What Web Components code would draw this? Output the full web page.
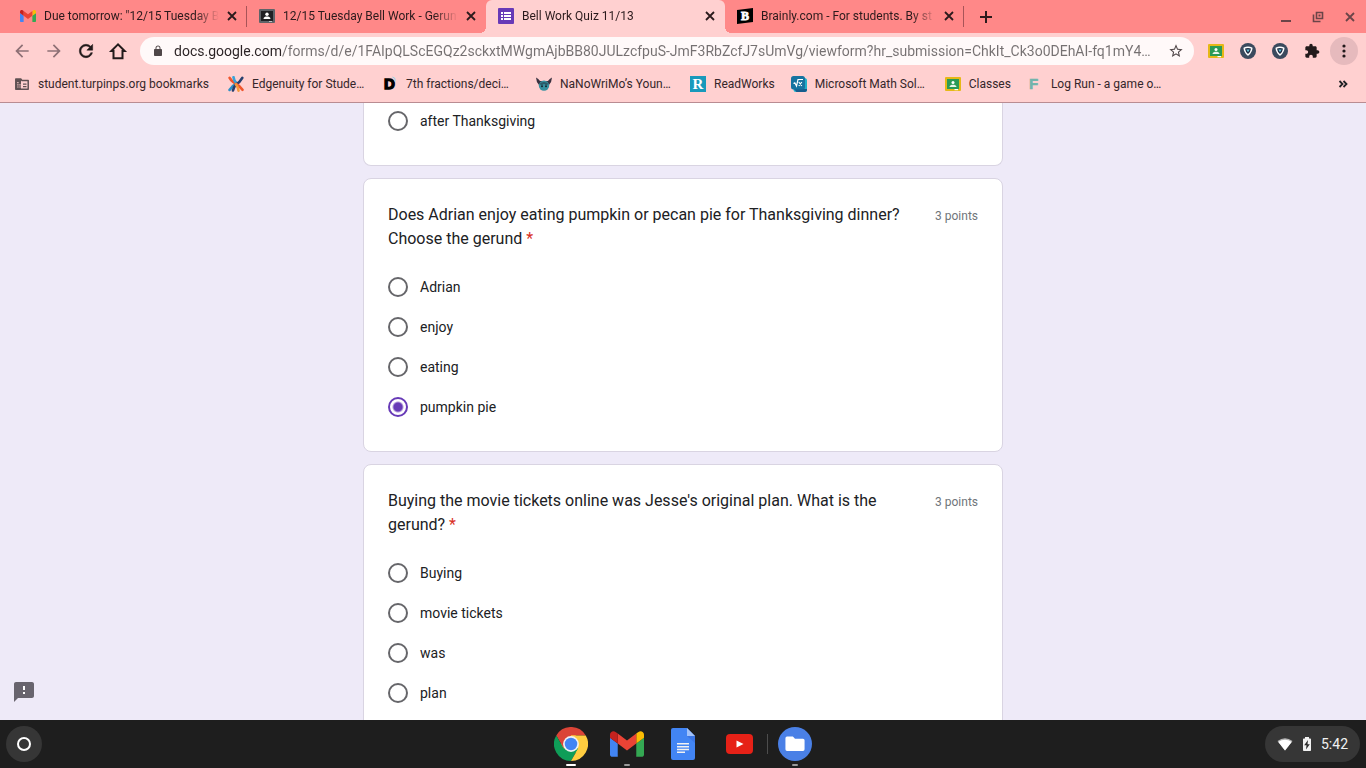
<!DOCTYPE html>
<html lang="en">
<head>
<meta charset="utf-8">
<meta name="viewport" content="width=device-width, initial-scale=1">
<title>Bell Work Quiz 11/13</title>
<style>
  html, body { height: 100%; }
  body {
    margin: 0;
    overflow: hidden;
    font-family: Roboto, "Noto Sans", sans-serif;
    font-size: 12px;
    color: #202124;
  }
</style>
</head>
<body>
<desk-top>
  <tab-strip slot="browser">
    <browser-tab icon="gmail" divider>Due tomorrow: "12/15 Tuesday B</browser-tab>
    <browser-tab icon="classroom-dark">12/15 Tuesday Bell Work - Gerun</browser-tab>
    <browser-tab icon="forms" active>Bell Work Quiz 11/13</browser-tab>
    <browser-tab icon="brainly" divider>Brainly.com - For students. By st</browser-tab>
  </tab-strip>
  <nav-bar slot="browser" url="docs.google.com/forms/d/e/1FAIpQLScEGQz2sckxtMWgmAjbBB80JULzcfpuS-JmF3RbZcfJ7sUmVg/viewform?hr_submission=ChkIt_Ck3o0DEhAI-fq1mY4…"></nav-bar>
  <bookmark-bar slot="browser">
    <book-mark icon="folder" managed>student.turpinps.org bookmarks</book-mark>
    <book-mark icon="edgenuity" cut>Edgenuity for Stude…</book-mark>
    <book-mark icon="letter-d" cut>7th fractions/deci…</book-mark>
    <book-mark icon="viking" cut>NaNoWriMo’s Youn…</book-mark>
    <book-mark icon="readworks">ReadWorks</book-mark>
    <book-mark icon="math" cut>Microsoft Math Sol…</book-mark>
    <book-mark icon="classroom">Classes</book-mark>
    <book-mark icon="letter-f" cut>Log Run - a game o…</book-mark>
  </bookmark-bar>
  <quiz-page slot="page">
    <quiz-card continued>
      <quiz-option>after Thanksgiving</quiz-option>
    </quiz-card>
    <quiz-card points="3 points">
      <span slot="question">Does Adrian enjoy eating pumpkin or pecan pie for Thanksgiving dinner? Choose the gerund</span>
      <quiz-option>Adrian</quiz-option>
      <quiz-option>enjoy</quiz-option>
      <quiz-option>eating</quiz-option>
      <quiz-option checked>pumpkin pie</quiz-option>
    </quiz-card>
    <quiz-card points="3 points">
      <span slot="question">Buying the movie tickets online was Jesse's original plan. What is the gerund?</span>
      <quiz-option>Buying</quiz-option>
      <quiz-option>movie tickets</quiz-option>
      <quiz-option>was</quiz-option>
      <quiz-option>plan</quiz-option>
    </quiz-card>
  </quiz-page>
  <app-shelf slot="shelf" time="5:42"></app-shelf>
</desk-top>

<script>
  const ICONS = {
    gmail: ['52 42 88 66', '<path fill="#4285f4" d="M58 108h14V74L52 59v43c0 3.32 2.69 6 6 6"/><path fill="#34a853" d="M120 108h14c3.32 0 6-2.69 6-6V59l-20 15"/><path fill="#fbbc04" d="M120 48v26l20-15v-8c0-7.42-8.47-11.65-14.4-7.2"/><path fill="#ea4335" d="M72 74V48l24 18 24-18v26L96 92"/><path fill="#c5221f" d="M52 51v8l20 15V48l-5.6-4.2c-5.94-4.45-14.4-.22-14.4 7.2"/>'],
    'classroom-dark': ['0 0 16 16', '<rect y="1" width="16" height="14" rx="1" fill="#5f6368"/><rect x="2" y="3" width="12" height="10" fill="#202124"/><circle cx="8" cy="6.3" r="1.7" fill="#fff"/><path fill="#fff" d="M4.5 11c0-1.9 2-2.5 3.5-2.5s3.5.6 3.5 2.5z"/><path d="M10 13h3v1h-3z" fill="#bdc1c6"/>'],
    classroom: ['0 0 16 16', '<rect y="1" width="16" height="14" rx="1" fill="#e5b817"/><rect x="2" y="3" width="12" height="10" fill="#2b9a56"/><circle cx="8" cy="6.5" r="1.5" fill="#fff"/><path fill="#e8f5e9" d="M4.5 11c0-1.7 2-2.2 3.5-2.2s3.5.5 3.5 2.2z"/><path d="M9.5 13H13v1.2H9.5z" fill="#fff"/>'],
    forms: ['0 0 16 16', '<rect width="16" height="16" rx="1" fill="#673ab7"/><path fill="#fff" d="M3 4h2v2H3zM6 4h7v2H6zM3 7h2v2H3zM6 7h7v2H6zM3 10h2v2H3zM6 10h7v2H6z"/>'],
    brainly: ['0 0 16 16', '<path d="M0 2 16 0v14L0 16z"/><text x="8" y="12" text-anchor="middle" font-family="Liberation Serif, serif" font-weight="700" font-size="12" fill="#fff" stroke="#fff" stroke-width=".8">B</text>'],
    close: ['0 0 16 16', '<path d="M4 4l8 8M12 4l-8 8" stroke="currentColor" stroke-width="1.8" fill="none"/>'],
    plus: ['0 0 16 16', '<path d="M8 2v12M2 8h12" stroke="currentColor" stroke-width="2" fill="none"/>'],
    minimize: ['0 0 16 16', '<path d="M3 12h10" stroke="currentColor" stroke-width="2"/>'],
    restore: ['0 0 16 16', '<path d="M6.5 3.5h6v6h-6zM3.5 5.5v7h7" stroke="currentColor" stroke-width="1.6" fill="none"/><path d="M8.5 5.5h2v2h-2z" fill="currentColor"/>'],
    back: ['0 0 24 24', '<path fill="currentColor" d="M20 11H7.83l5.59-5.59L12 4l-8 8 8 8 1.41-1.41L7.83 13H20v-2z"/>'],
    forward: ['0 0 24 24', '<path fill="currentColor" d="M4 13h12.17l-5.59 5.59L12 20l8-8-8-8-1.41 1.41L16.17 11H4z"/>'],
    reload: ['0 0 24 24', '<path fill="currentColor" stroke="currentColor" stroke-width=".6" d="M17.65 6.35C16.2 4.9 14.21 4 12 4c-4.42 0-7.99 3.58-7.99 8s3.57 8 7.99 8c3.73 0 6.84-2.55 7.73-6h-2.08c-.82 2.33-3.04 4-5.65 4-3.31 0-6-2.69-6-6s2.69-6 6-6c1.66 0 3.14.69 4.22 1.78L13 11h7V4l-2.35 2.35z"/>'],
    home: ['0 0 24 24', '<path fill="none" stroke="currentColor" stroke-width="2.4" d="M12 4 4 12h2.6v8.600h10.800V12H20z"/>'],
    lock: ['0 0 24 24', '<path fill="currentColor" d="M18 8h-1V6c0-2.76-2.24-5-5-5S7 3.24 7 6v2H6c-1.1 0-2 .9-2 2v10c0 1.1.9 2 2 2h12c1.1 0 2-.9 2-2V10c0-1.1-.9-2-2-2zm-2.900 0H8.9V6c0-1.71 1.39-3.1 3.1-3.1s3.1 1.39 3.1 3.1v2z"/>'],
    star: ['0 0 24 24', '<path fill="currentColor" d="M22 9.24l-7.19-.62L12 2 9.19 8.63 2 9.24l5.46 4.73L5.82 21 12 17.27 18.18 21l-1.63-7.03L22 9.24zM12 15.4l-3.76 2.27 1-4.28-3.32-2.88 4.38-.38L12 6.1l1.71 4.04 4.38.38-3.32 2.88 1 4.28L12 15.4z"/>'],
    shield: ['0 0 16 16', '<circle cx="8" cy="8" r="8" fill="#3b4a5e"/><path d="M4.2 5.2Q8 3.2 11.8 5.2 11.5 9 8 12 4.5 9 4.2 5.2z" fill="#202b44" stroke="#fff" stroke-width="1.4" stroke-linejoin="round"/><path d="M6.3 6.5h3.4L8 9.3z" fill="#5fc5d8"/>'],
    puzzle: ['0 0 24 24', '<path fill="currentColor" d="M20.5 11H19V7c0-1.1-.9-2-2-2h-4V3.5C13 2.12 11.88 1 10.5 1S8 2.12 8 3.5V5H4c-1.1 0-1.99.9-1.99 2v3.8H3.5c1.49 0 2.7 1.21 2.7 2.7s-1.21 2.7-2.7 2.7H2V20c0 1.1.9 2 2 2h3.8v-1.5c0-1.49 1.21-2.7 2.7-2.7s2.7 1.21 2.7 2.7V22H17c1.1 0 2-.9 2-2v-4h1.5c1.38 0 2.5-1.12 2.5-2.5S21.88 11 20.5 11z"/>'],
    dots: ['0 0 16 16', '<g fill="currentColor"><circle cx="8" cy="3" r="1.6"/><circle cx="8" cy="8" r="1.6"/><circle cx="8" cy="13" r="1.6"/></g>'],
    chevrons: ['0 0 16 16', '<path d="M4.5 5l3 3-3 3M8.5 5l3 3-3 3" stroke="currentColor" stroke-width="1.8" fill="none"/>'],
    folder: ['0 0 16 16', '<path fill="none" stroke="#5f5052" stroke-width="1.5" stroke-linejoin="round" d="M1.8 3h5L8 4.600h6.2V13.200H1.800z"/><path fill="#5f5052" d="M2 3h5v10H2z"/><path fill="#ffd0d0" d="M3.3 6h1.2v1.2H3.3zM3.3 8.2h1.2v1.2H3.3zM3.3 10.4h1.2v1.2H3.3zM5.4 8.2h1.2v1.2H5.4zM5.4 10.4h1.2v1.2H5.4z"/><path fill="#5f5052" d="M9 7.5h3.5v1.2H9zM9 10h3.5v1.2H9z"/>'],
    edgenuity: ['0 0 16 16', '<g fill="none" stroke-width="2.6" stroke-linecap="round"><path stroke="#f0562d" d="M1.6 1.8Q4 6 8 7.5"/><path stroke="#37a3d8" d="M5.5 1.2Q6 4.5 8 6.5"/><path stroke="#27406f" d="M14.3 1.8Q12 6 8 8.5"/><path stroke="#2f8fc4" d="M8 8Q4.5 9.5 1.5 14"/><path stroke="#27406f" d="M7.5 9Q6 11 5 14.5"/><path stroke="#f0562d" d="M8 8Q11.5 9.5 14.5 13.8"/><path stroke="#f59a3d" d="M8 8.5Q10 11 10.5 14.6"/></g>'],
    'letter-d': ['0 0 16 16', '<text x="2" y="13" font-family="Liberation Sans, sans-serif" font-weight="700" font-size="15" stroke="#000" stroke-width="1.4">D</text><path d="M10.5 1 13 2.5v3" stroke="#8fd0e6" fill="none"/>'],
    viking: ['0 0 16 16', '<path fill="#3a3140" d="M0 1.5Q2.5 2.5 4 5h8q1.5-2.5 4-3.5Q15.8 6 13 9L10 8H6L3 9Q.2 6 0 1.5z"/><circle cx="8" cy="9.6" r="5.2" fill="#36909e"/><path fill="#2c5a68" d="M3.2 8Q8 4 12.8 8L10 9.2 8 7.8 6 9.2z"/><circle cx="6" cy="10.3" r="1" fill="#182530"/><circle cx="10" cy="10.3" r="1" fill="#182530"/>'],
    readworks: ['0 0 16 16', '<rect width="16" height="16" fill="#1899bb"/><text x="8" y="13" text-anchor="middle" font-family="Liberation Serif, serif" font-weight="700" font-size="15" fill="#fff">R</text>'],
    math: ['0 0 16 16', '<rect x="2.5" y="2" width="13.5" height="14" rx="2.5" fill="#1fb0c9"/><path d="M3 13h13v.5A2.500 2.500 0 0 1 13.5 16h-8z" fill="#155c8d"/><rect width="14" height="13.5" rx="2.5" fill="#1673a0"/><path d="M2.5 7.5l1.3-.7L5.5 10 7 3.500h5M7.8 6l3 4M10.8 6l-3 4" stroke="#fff" stroke-width="1.2" fill="none"/>'],
    'letter-f': ['0 0 16 16', '<text x="2" y="13" font-family="Liberation Sans, sans-serif" font-weight="700" font-size="15" fill="#72b4ac" stroke="#72b4ac" stroke-width=".6">F</text>'],
    feedback: ['0 0 24 24', '<path fill="#fff" d="M10 5h4v10h-4z"/><path fill="currentColor" d="M20 2H4c-1.1 0-2 .9-2 2v18l4-4h14c1.1 0 2-.9 2-2V4c0-1.1-.9-2-2-2zm-7 12h-2v-2h2v2zm0-4h-2V6h2v4z"/>'],
    chrome: ['0 0 48 48', '<circle cx="24" cy="24" r="14" fill="#ffce44"/><path fill="#db4437" d="M3.2 12A24 24 0 0 1 44.8 12H24L13.6 30z"/><path fill="#0f9d58" d="M3.2 12 13.6 30h20.8L24 48A24 24 0 0 1 3.2 12z"/><path fill="#ffcd40" d="M44.8 12A24 24 0 0 1 24 48l10.4-18L24 12z"/><circle cx="24" cy="24" r="11.2" fill="#f1f1f1"/><circle cx="24" cy="24" r="8.8" fill="#4285f4"/>'],
    docs: ['0 0 24 32', '<path fill="#4285f4" d="M2 0h14l8 8v22a2 2 0 0 1-2 2H2a2 2 0 0 1-2-2V2a2 2 0 0 1 2-2z"/><path fill="#a1c2fa" d="M16 0l8 8h-8z"/><path fill="#3367d6" d="M16 8h8v7z" opacity=".5"/><path fill="#f1f1f1" d="M6 15h12v1.5H6zM6 18h12v1.5H6zM6 20.8h12v1.5H6zM6 23.5h8V25H6z"/>'],
    youtube: ['0 0 27 20', '<rect width="27" height="20" rx="4" fill="#e62117"/><path fill="#fff" d="M10.5 6.5v7l7-3.5z"/>'],
    files: ['0 0 32 32', '<circle cx="16" cy="16" r="16" fill="#4a80e6"/><path fill="#fff" d="M8.5 9H14l2 2h7.5A1.5 1.5 0 0 1 25 12.5V21a1.5 1.5 0 0 1-1.5 1.5h-15A1.5 1.5 0 0 1 7 21V10.5A1.5 1.5 0 0 1 8.5 9z"/>'],
    launcher: ['0 0 16 16', '<circle cx="8" cy="8" r="6" fill="none" stroke="#fff" stroke-width="2"/>'],
    wifi: ['0 0 16 16', '<path fill="#b5b5b5" d="M8 14.5.5 5Q8-.5 15.5 5z"/><path fill="#fff" d="M8 14.5 1.3 6Q8 1.600 14.700 6z"/>'],
    battery: ['0 0 16 16', '<path fill="#f1f1f1" d="M6 1h4v1.500h1.200q.8 0 .8.8v11q0 .7-.8.7H4.800q-.8 0-.8-.7v-11q0-.8.8-.8H6z"/><path fill="#2a2a2a" d="M9 4 5.2 9.3h2.3L7 13.5l3.8-5.3H8.5z"/>']
  };

  function define(name, markup, setup) {
    customElements.define(name, class extends HTMLElement {
      constructor() {
        super();
        this.attachShadow({mode: 'open'}).innerHTML = markup;
      }
      connectedCallback() {
        if (setup) setup(this, this.shadowRoot);
      }
    });
  }

  define('ui-icon', `
    <style>
      :host { display: block; flex: none; width: var(--w, 16px); height: var(--h, var(--w, 16px)); }
      svg { display: block; width: 100%; height: 100%; }
    </style>
    <svg aria-hidden="true"></svg>`, (el, root) => {
      const [box, shapes] = ICONS[el.getAttribute('name')];
      const svg = root.querySelector('svg');
      svg.setAttribute('viewBox', box);
      svg.innerHTML = shapes;
  });

  define('icon-button', `
    <style>
      :host { display: block; flex: none; }
      button {
        display: grid;
        place-items: center;
        width: var(--button, 28px);
        height: var(--button, 28px);
        padding: 0;
        border: 0;
        border-radius: 50%;
        background: var(--face, transparent);
        color: inherit;
      }
      ui-icon { --w: var(--icon, 16px); }
    </style>
    <button type="button"></button>`, (el, root) => {
      const button = root.querySelector('button');
      button.setAttribute('aria-label', el.getAttribute('label'));
      button.innerHTML = `<ui-icon name="${el.getAttribute('icon')}"></ui-icon>`;
  });

  define('desk-top', `
    <style>
      :host { display: flex; flex-direction: column; height: 100vh; }
      header { flex: none; background: #ffd0d0; border-bottom: 1px solid #b98c92; }
      main { flex: 1; min-height: 0; }
    </style>
    <header><slot name="browser"></slot></header>
    <main><slot name="page"></slot></main>
    <slot name="shelf"></slot>`);

  define('tab-strip', `
    <style>
      :host { display: flex; align-items: center; height: 33px; padding-left: 8px; background: #ff8888; color: #2b1a1c; }
      .plus { margin-left: 8px; }
      .window { display: flex; margin-left: auto; color: #6b4448; --button: 32px; }
    </style>
    <slot></slot>
    <icon-button class="plus" icon="plus" label="New tab"></icon-button>
    <div class="window">
      <icon-button icon="minimize" label="Minimize"></icon-button>
      <icon-button icon="restore" label="Restore"></icon-button>
      <icon-button icon="close" label="Close window"></icon-button>
    </div>`);

  define('browser-tab', `
    <style>
      :host {
        position: relative;
        display: flex;
        align-items: center;
        box-sizing: border-box;
        flex: 0 1 239px;
        min-width: 0;
        height: 100%;
        padding: 0 7px 1px 12px;
      }
      .title {
        flex: 1;
        min-width: 0;
        margin: 0 5px 0 8px;
        overflow: hidden;
        white-space: nowrap;
        line-height: 16px;
        -webkit-mask-image: linear-gradient(to left, transparent, #000 24px);
        mask-image: linear-gradient(to left, transparent, #000 24px);
      }
      icon-button { --button: 16px; }
      :host([active]) { background: #ffd0d0; border-radius: 6px 6px 0 0; }
      /* flared feet of the selected tab */
      :host([active])::before, :host([active])::after {
        content: "";
        position: absolute;
        bottom: 0;
        width: 6px;
        height: 6px;
      }
      :host([active])::before { right: 100%; background: radial-gradient(circle at 0 0, transparent 6px, #ffd0d0 6px); }
      :host([active])::after { left: 100%; background: radial-gradient(circle at 100% 0, transparent 6px, #ffd0d0 6px); }
      :host([divider])::after {
        content: "";
        position: absolute;
        right: 0;
        top: 6px;
        bottom: 6px;
        width: 1px;
        background: #a85458;
      }
    </style>
    <span id="icon"></span>
    <span class="title"><slot></slot></span>
    <icon-button icon="close" label="Close tab"></icon-button>`, (el, root) => {
      root.querySelector('#icon').innerHTML = `<ui-icon name="${el.getAttribute('icon')}"></ui-icon>`;
  });

  define('nav-bar', `
    <style>
      :host { display: flex; align-items: center; gap: 4px; height: 36px; padding: 0 8px; color: #221a1b; --icon: 20px; }
      .dim { color: #8e7075; }
      .url {
        display: flex;
        align-items: center;
        flex: 1;
        min-width: 0;
        height: 28px;
        margin: 0 4px;
        padding: 0 4px 0 12px;
        border-radius: 14px;
        background: #fff9f9;
        color: #4f4648;
      }
      .url ui-icon { --w: 12px; }
      .url icon-button { --icon: 16px; }
      /* host name dark, path grey */
      input {
        flex: 1;
        min-width: 0;
        height: 20px;
        margin: 0 4px 0 10px;
        padding: 0;
        border: 0;
        outline: 0;
        font: 14px/20px Roboto, "Noto Sans", sans-serif;
        color: #757071;
        -webkit-text-fill-color: transparent;
        background: linear-gradient(to right, #2a2224 107px, #757071 107px);
        -webkit-background-clip: text;
        background-clip: text;
      }
      .small { --icon: 16px; }
      .menu { --icon: 16px; --face: #e6babd; }
    </style>
    <icon-button class="dim" icon="back" label="Back"></icon-button>
    <icon-button class="dim" icon="forward" label="Forward"></icon-button>
    <icon-button icon="reload" label="Reload"></icon-button>
    <icon-button icon="home" label="Home"></icon-button>
    <div class="url">
      <ui-icon name="lock"></ui-icon>
      <input type="text" aria-label="Address" spellcheck="false">
      <icon-button icon="star" label="Bookmark this page"></icon-button>
    </div>
    <icon-button class="small" icon="classroom" label="Classroom"></icon-button>
    <icon-button class="small" icon="shield" label="Shield"></icon-button>
    <icon-button class="small" icon="shield" label="Shield"></icon-button>
    <icon-button class="small" icon="puzzle" label="Extensions"></icon-button>
    <icon-button class="menu" icon="dots" label="Menu"></icon-button>`, (el, root) => {
      root.querySelector('input').value = el.getAttribute('url');
  });

  define('bookmark-bar', `
    <style>
      :host { display: flex; align-items: center; gap: 16px; height: 30px; padding: 0 9px 3px 14px; }
      icon-button { margin-left: auto; }
    </style>
    <slot></slot>
    <icon-button icon="chevrons" label="More bookmarks"></icon-button>`);

  define('book-mark', `
    <style>
      :host { display: block; flex: none; }
      a { display: flex; align-items: center; gap: 8px; color: #35262a; text-decoration: none; line-height: 16px; white-space: nowrap; }
      :host([cut]) .label { min-width: 114px; }
      :host([managed]) .label { min-width: 174px; }
    </style>
    <a href="#"><span id="icon"></span><span class="label"><slot></slot></span></a>`, (el, root) => {
      root.querySelector('#icon').innerHTML = `<ui-icon name="${el.getAttribute('icon')}"></ui-icon>`;
  });

  define('quiz-page', `
    <style>
      :host { display: block; position: relative; height: 100%; overflow: hidden; background: #eeeaf8; }
      form {
        display: flex;
        flex-direction: column;
        gap: 12px;
        max-width: 640px;
        margin: -2px auto 0;
      }
      .feedback { position: absolute; left: 12px; bottom: 16px; color: #68646e; --button: 24px; --icon: 24px; }
    </style>
    <form><slot></slot></form>
    <icon-button class="feedback" icon="feedback" label="Report a problem"></icon-button>`);

  define('quiz-card', `
    <style>
      :host {
        display: block;
        flex: none;
        box-sizing: border-box;
        padding: 24px;
        border: 1px solid #d9d4e2;
        border-radius: 8px;
        background: #fff;
      }
      :host([continued]) { padding-top: 0; border-top: 0; border-radius: 0 0 8px 8px; }
      .head { display: flex; gap: 16px; margin-bottom: 16px; line-height: 24px; }
      .question { flex: 1; font-size: 16px; }
      .star { color: #d93025; }
      .points { flex: none; padding-top: 1px; color: #70757a; }
    </style>
    <div class="head">
      <div class="question" role="heading" aria-level="2"><slot name="question"></slot> <span class="star">*</span></div>
      <div class="points"></div>
    </div>
    <div role="radiogroup"><slot></slot></div>`, (el, root) => {
      if (el.hasAttribute('continued')) {
        root.querySelector('.head').remove();
        return;
      }
      root.querySelector('.points').textContent = el.getAttribute('points');
  });

  define('quiz-option', `
    <style>
      :host { display: block; }
      label { display: flex; align-items: center; gap: 12px; height: 40px; font-size: 14px; line-height: 20px; }
      input {
        appearance: none;
        box-sizing: border-box;
        width: 20px;
        height: 20px;
        margin: 0;
        border: 2px solid #66666a;
        border-radius: 50%;
        background: #fff;
      }
      input:checked { border-color: #673ab7; background: radial-gradient(circle, #673ab7 4px, #fff 6px); }
    </style>
    <label><input type="radio"><span><slot></slot></span></label>`, (el, root) => {
      const input = root.querySelector('input');
      input.checked = el.hasAttribute('checked');
      // each radio sits in its own shadow tree, so clear the siblings by hand
      input.addEventListener('change', () => {
        el.parentNode.querySelectorAll('quiz-option').forEach(other => {
          if (other !== el) other.shadowRoot.querySelector('input').checked = false;
        });
      });
  });

  define('shelf-app', `
    <style>
      :host { position: relative; display: block; }
      button { display: grid; place-items: center; width: 56px; height: 48px; padding: 0; border: 0; background: none; }
      :host([running])::after, :host([active])::after {
        content: "";
        position: absolute;
        left: 25px;
        bottom: 2px;
        width: 6px;
        height: 2px;
        border-radius: 1px;
        background: #9a9a9a;
      }
      :host([active])::after { left: 23px; width: 10px; background: #fff; }
    </style>
    <button type="button"></button>`, (el, root) => {
      const button = root.querySelector('button');
      button.setAttribute('aria-label', el.getAttribute('label'));
      button.innerHTML = `<ui-icon name="${el.getAttribute('icon')}"></ui-icon>`;
  });

  define('app-shelf', `
    <style>
      :host {
        display: grid;
        grid-template-columns: 1fr auto 1fr;
        align-items: center;
        flex: none;
        height: 48px;
        padding: 0 6px;
        background: #1e1e1e;
      }
      .launcher { --button: 36px; --face: #363636; }
      .apps { display: flex; align-items: center; --w: 34px; }
      .docs { --w: 24px; --h: 32px; }
      .youtube { --w: 27px; --h: 20px; }
      .rule { width: 1px; height: 20px; margin-right: -1px; background: #4d4d4d; }
      .tray {
        display: flex;
        align-items: center;
        justify-self: end;
        gap: 6px;
        height: 36px;
        padding: 0 12px;
        border: 0;
        border-radius: 18px;
        background: #363636;
        color: #f1f1f1;
        font: 14px/20px Roboto, "Noto Sans", sans-serif;
      }
    </style>
    <icon-button class="launcher" icon="launcher" label="Launcher"></icon-button>
    <div class="apps">
      <shelf-app icon="chrome" label="Chrome" active></shelf-app>
      <shelf-app icon="gmail" label="Gmail" running></shelf-app>
      <shelf-app class="docs" icon="docs" label="Docs"></shelf-app>
      <shelf-app class="youtube" icon="youtube" label="YouTube"></shelf-app>
      <div class="rule"></div>
      <shelf-app icon="files" label="Files" running></shelf-app>
    </div>
    <button class="tray" type="button">
      <ui-icon name="wifi"></ui-icon>
      <ui-icon name="battery"></ui-icon>
      <span id="time"></span>
    </button>`, (el, root) => {
      root.querySelector('#time').textContent = el.getAttribute('time');
  });
</script>
</body>
</html>
